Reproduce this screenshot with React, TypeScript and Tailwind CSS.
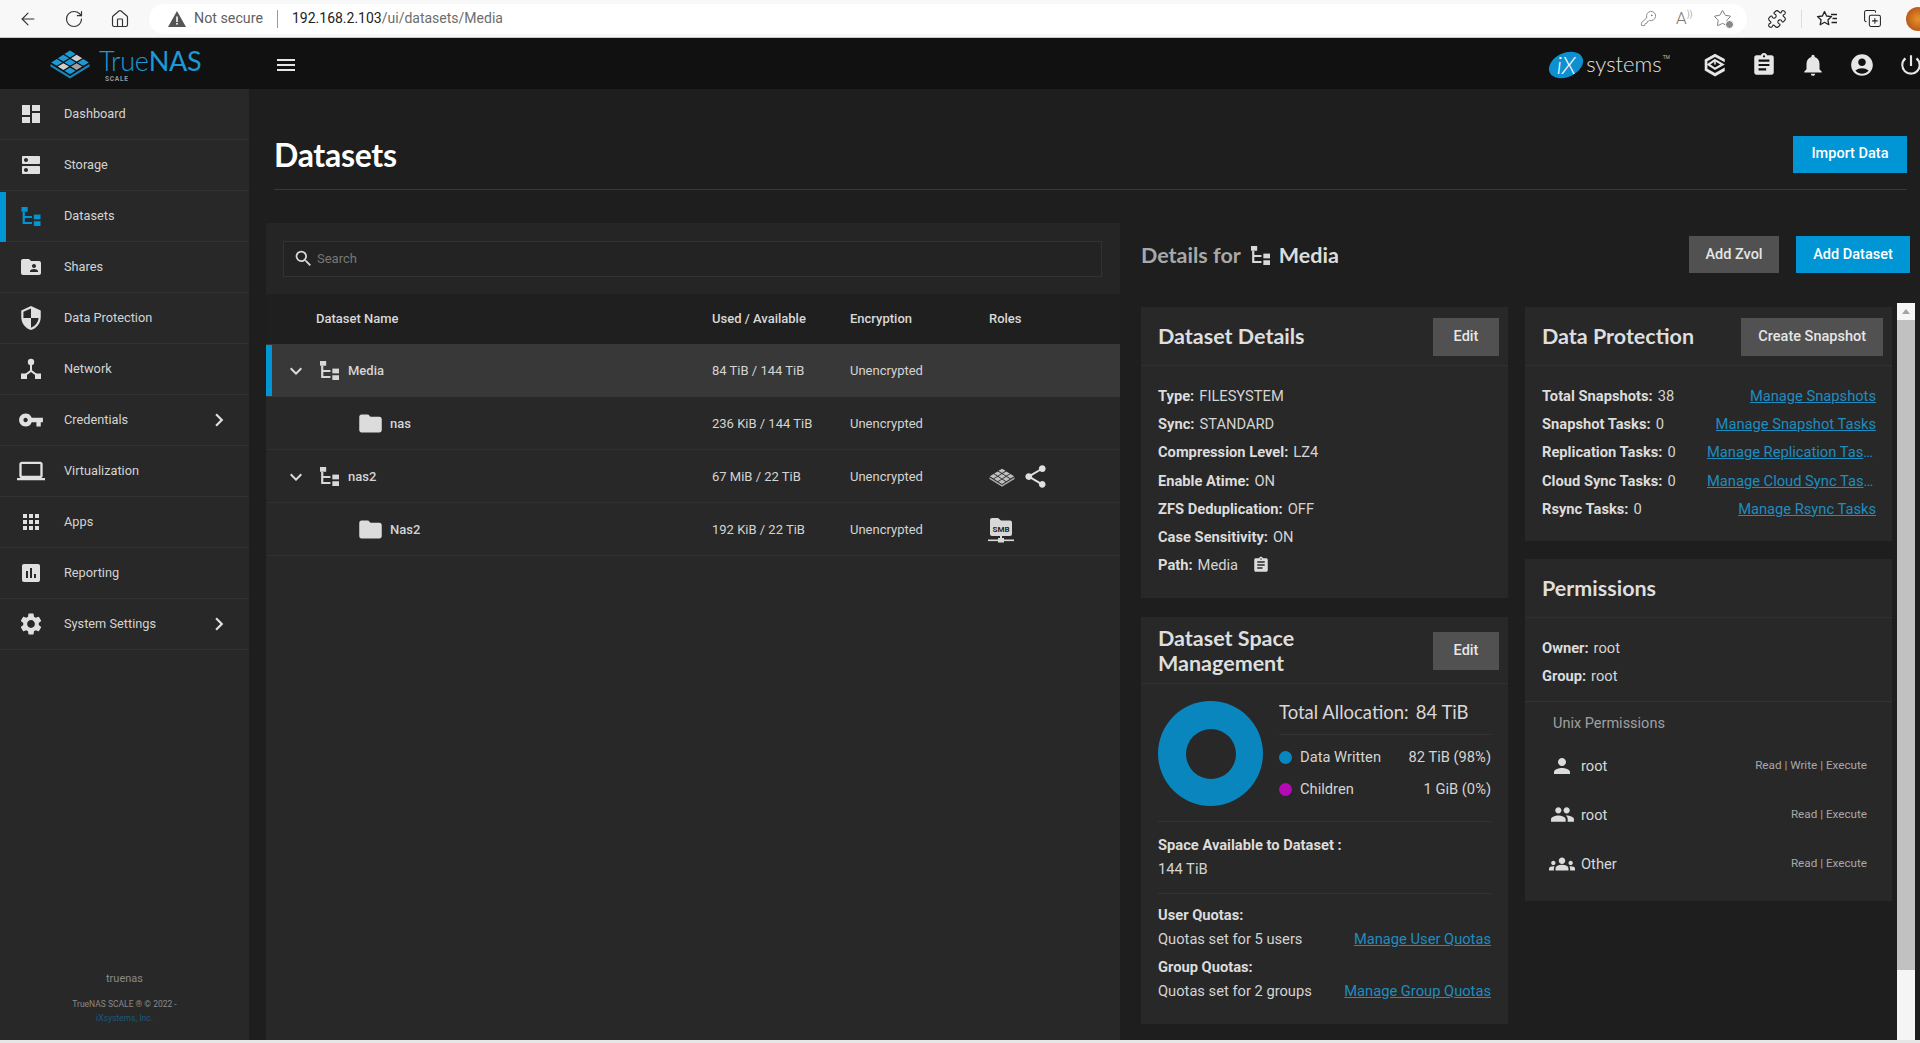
import React from "react";
import {
  MdDashboard, MdDns, MdFolderShared, MdSecurity, MdVpnKey, MdLaptop, MdApps, MdAssessment, MdSettings,
  MdChevronRight, MdExpandMore, MdFolder, MdPerson, MdPeople, MdGroups, MdAccountCircle, MdNotifications,
  MdAssignment, MdPowerSettingsNew, MdShare, MdSearch, MdMenu,
} from "react-icons/md";
import { LuArrowLeft, LuRotateCw, LuHouse, LuKeyRound, LuPuzzle, LuStar, LuCopyPlus } from "react-icons/lu";

const HEAD = { fontFamily: "Lato, 'Open Sans', sans-serif" };

function TreeIcon({ className }: { className?: string }) {
  return (
    <svg viewBox="0 0 20 20" className={className} fill="currentColor">
      <rect x="0" y="0" width="6.5" height="5" />
      <path d="M1.2 5h2.3v4.6H11v2.1H3.5v4H11v2.1H1.2z" />
      <rect x="13" y="8" width="7" height="5" />
      <rect x="13" y="15" width="7" height="5" />
    </svg>
  );
}

function NetworkIcon({ className }: { className?: string }) {
  return (
    <svg viewBox="0 0 24 24" className={className} fill="currentColor">
      <circle cx="12" cy="5" r="3.2" />
      <path d="M11 7h2v6.2l5.2 4-1.2 1.6L12 15l-5 3.8-1.2-1.6 5.2-4z" />
      <rect x="2" y="16.5" width="6" height="5.5" />
      <rect x="16" y="16.5" width="6" height="5.5" />
    </svg>
  );
}

function Rhombi({ className, colors }: { className?: string; colors: string[] }) {
  const items: React.ReactElement[] = [];
  for (let i = 0; i < 3; i++) {
    for (let j = 0; j < 3; j++) {
      const cx = 21 + (i - j) * 6.6;
      const cy = 6 + (i + j) * 4.2;
      items.push(
        <polygon
          key={`${i}-${j}`}
          points={`${cx},${cy - 3.4} ${cx + 5.6},${cy} ${cx},${cy + 3.4} ${cx - 5.6},${cy}`}
          fill={colors[(i * 3 + j) % colors.length]}
        />
      );
    }
  }
  return (
    <svg viewBox="0 0 42 31" className={className}>
      {items}
      <path d="M1.5 16 21 28l19.5-12v2.6L21 30.5 1.5 18.6z" fill={colors[0]} opacity="0.85" />
    </svg>
  );
}

function CubeIcon({ className }: { className?: string }) {
  return (
    <svg viewBox="0 0 24 24" className={className} fill="none" stroke="currentColor">
      <path d="M12 1.5 21 6.5v3L12 4.6 5 8.6v6.8l7 4 9-5.2V17.5l-9 5-9.5-5.5V7z" fill="currentColor" stroke="none" />
      <path d="M12 7.5 19 11.5 12 15.5 6 11.5z" strokeWidth="2" />
      <path d="M12 7.5v4" strokeWidth="1.5" />
    </svg>
  );
}

function SmbIcon({ className }: { className?: string }) {
  return (
    <svg viewBox="0 0 26 26" className={className}>
      <path d="M2 3a2 2 0 0 1 2-2h6l3 2.5h9a2 2 0 0 1 2 2V17a2 2 0 0 1-2 2H4a2 2 0 0 1-2-2z" fill="#d8d8d8" />
      <text x="13" y="14.5" textAnchor="middle" fontSize="8" fontWeight="700" fontFamily="Roboto, sans-serif" fill="#282828">SMB</text>
      <rect x="12" y="19" width="2" height="3" fill="#d8d8d8" />
      <rect x="0" y="22.5" width="26" height="1.6" fill="#d8d8d8" />
      <rect x="10" y="21" width="6" height="4.5" fill="#d8d8d8" />
    </svg>
  );
}

function FavIcon({ className }: { className?: string }) {
  return (
    <svg viewBox="0 0 22 20" className={className} fill="none" stroke="currentColor" strokeWidth="1.3" strokeLinejoin="round">
      <path d="M8.5 2.5 10.6 7l4.9.6-3.6 3.3.9 4.8-4.3-2.4-4.3 2.4.9-4.8L1.5 7.6 6.4 7z" />
      <path d="M15 5.5h6M16.5 9.5H21M15.5 13.5H21" />
    </svg>
  );
}

function BrowserBar() {
  return (
    <div className="flex h-[38px] shrink-0 items-center bg-[#f8f8f8] border-b border-[#c8c8c8] overflow-hidden text-[#333]">
      <div className="flex shrink-0 items-center w-[149px] pl-[18px] gap-[26px]">
        <LuArrowLeft size={20} strokeWidth={1.4} />
        <LuRotateCw size={20} strokeWidth={1.4} />
        <LuHouse size={20} strokeWidth={1.4} />
      </div>
      <div className="flex h-[30px] w-[1598px] shrink-0 items-center rounded-full bg-white pl-[19px] pr-[15px] font-['Roboto',sans-serif] text-[14px]">
        <svg viewBox="0 0 18 16" className="h-[16px] w-[18px] text-[#555]" fill="currentColor">
          <path d="M9 0 18 16H0z" />
          <rect x="8.2" y="5.5" width="1.6" height="5.5" fill="#fff" />
          <rect x="8.2" y="12" width="1.6" height="1.6" fill="#fff" />
        </svg>
        <span className="ml-[8px] text-[14.25px] text-[#5f5f5f]">Not secure</span>
        <span className="mx-[14px] h-[18px] w-px bg-[#999]" />
        <span className="text-[#222]">192.168.2.103</span>
        <span className="text-[#6d6d6d]">/ui/datasets/Media</span>
        <div className="ml-auto flex items-center gap-[19px] text-[#777]">
          <LuKeyRound size={17} strokeWidth={1.2} />
          <span className="w-[18px] text-[17px] leading-none font-light">A<span className="text-[9px] align-top">))</span></span>
          <span className="relative flex">
            <LuStar size={19} strokeWidth={1.2} />
            <span className="absolute -bottom-px -right-[2px] h-[9px] w-[9px] rounded-full bg-[#888] border border-white" />
          </span>
        </div>
      </div>
      <div className="ml-[20px] flex shrink-0 items-center text-[#222]">
        <LuPuzzle size={20} strokeWidth={1.3} />
        <span className="mx-[14px] h-[18px] w-px bg-[#ddd]" />
        <FavIcon className="h-[20px] w-[22px]" />
        <LuCopyPlus size={19} strokeWidth={1.3} className="ml-[25px]" />
        <span className="ml-[24px] h-[24px] w-[24px] shrink-0 rounded-full bg-[radial-gradient(circle,#e8932c,#a8420f)]" />
      </div>
    </div>
  );
}

function TopBar() {
  return (
    <div className="flex h-[51px] shrink-0 items-center bg-[#111111] overflow-hidden">
      <div className="flex w-[249px] shrink-0 items-center pl-[49px]">
        <Rhombi className="h-[31px] w-[42px]" colors={["#1b9ad6", "#1b9ad6", "#1b9ad6", "#cfcfcf", "#1b9ad6", "#cfcfcf", "#1b9ad6", "#a0a0a0", "#1b9ad6"]} />
        <div className="relative ml-[8px] h-[44px] w-[102px]">
          <span style={HEAD} className="block text-[27px] leading-[36px] text-[#1b9ad6] tracking-[-0.3px] pt-[1px]">
            <span className="font-light">True</span><span className="font-normal">NAS</span>
          </span>
          <span className="absolute left-[6px] top-[34px] text-[6.5px] font-bold leading-none tracking-[0.8px] text-[#999] font-['Roboto',sans-serif]">SCALE</span>
        </div>
      </div>
      <MdMenu size={24} className="ml-[25px] mt-[2px] text-[#e6e6e6]" />
      <div className="ml-auto flex items-center pt-[2px]">
        <div className="relative mr-[2px] flex h-[28px] w-[36px] items-center justify-center">
          <span className="absolute inset-x-0 top-[2px] h-[24px] -rotate-[25deg] rounded-[50%] bg-[#0e8fd0]" />
          <span className="relative text-[24px] italic font-light leading-none text-white font-['Lato',sans-serif]">iX</span>
        </div>
        <span className="text-[22px] leading-none font-light text-[#e0e0e0] font-['Lato',sans-serif] -mt-[2px]">systems</span>
        <span className="mb-[14px] ml-px text-[5px] text-[#bbb] font-['Roboto',sans-serif]">TM</span>
        <div className="ml-[32px] flex items-center gap-[23px] text-[#e6e6e6] -mr-[4px]">
          <CubeIcon className="h-[26px] w-[26px]" />
          <MdAssignment size={26} />
          <MdNotifications size={26} />
          <MdAccountCircle size={26} />
          <MdPowerSettingsNew size={26} />
        </div>
      </div>
    </div>
  );
}

const NAV = [
  { label: "Dashboard", icon: <MdDashboard size={24} /> },
  { label: "Storage", icon: <MdDns size={24} /> },
  { label: "Datasets", icon: <TreeIcon className="h-[19px] w-[20px]" />, active: true },
  { label: "Shares", icon: <MdFolderShared size={24} /> },
  { label: "Data Protection", icon: <MdSecurity size={26} /> },
  { label: "Network", icon: <NetworkIcon className="h-[24px] w-[24px]" /> },
  { label: "Credentials", icon: <MdVpnKey size={26} />, more: true },
  { label: "Virtualization", icon: <MdLaptop size={28} /> },
  { label: "Apps", icon: <MdApps size={24} /> },
  { label: "Reporting", icon: <MdAssessment size={24} /> },
  { label: "System Settings", icon: <MdSettings size={26} />, more: true },
];

function Sidebar() {
  return (
    <aside className="flex w-[249px] shrink-0 flex-col bg-[#282828] font-['Roboto',sans-serif]">
      {NAV.map((n) => (
        <div key={n.label} className="relative flex h-[51px] shrink-0 items-center border-b border-[#323232] text-[12.75px] text-[#d4d4d4]">
          {n.active && <span className="absolute left-0 top-px h-[50px] w-[6px] bg-[#0095d5]" />}
          <span className={`flex w-[64px] shrink-0 items-center justify-center pr-[3px] ${n.active ? "text-[#0095d5]" : "text-[#e0e0e0]"}`}>{n.icon}</span>
          <span>{n.label}</span>
          {n.more && <MdChevronRight size={26} className="ml-auto mr-[17px] text-[#e0e0e0]" />}
        </div>
      ))}
      <div className="mt-auto flex flex-col items-center pb-[15px] text-[#8a8a8a]">
        <span className="text-[11px] leading-[14px]">truenas</span>
        <span className="mt-[11px] text-[8.5px] leading-[14px]">TrueNAS SCALE ® © 2022 -</span>
        <span className="text-[8.5px] leading-[14px] text-[#1c5a78]">iXsystems, Inc.</span>
      </div>
    </aside>
  );
}

const ROWS = [
  { name: "Media", used: "84 TiB / 144 TiB", root: true, active: true },
  { name: "nas", used: "236 KiB / 144 TiB" },
  { name: "nas2", used: "67 MiB / 22 TiB", root: true, roles: "share" },
  { name: "Nas2", used: "192 KiB / 22 TiB", roles: "smb" },
];

function DatasetTable() {
  return (
    <section className="ml-[17px] flex w-[854px] shrink-0 flex-col bg-[#282828] font-['Roboto',sans-serif]">
      <div className="flex h-[71px] shrink-0 items-center bg-[#252525] pl-[17px] pr-[18px]">
        <div className="flex h-[36px] w-full items-center border border-[#323232] bg-[#232323] pl-[9px]">
          <MdSearch size={21} className="text-[#d8d8d8]" />
          <span className="ml-[3px] text-[13px] text-[#777]">Search</span>
        </div>
      </div>
      <div className="grid h-[50px] shrink-0 grid-cols-[446px_138px_138px_1fr] items-center bg-[#1f1f1f] text-[13px] font-medium text-[#d8d8d8]">
        <span className="pl-[50px]">Dataset Name</span>
        <span>Used / Available</span>
        <span>Encryption</span>
        <span className="pl-px">Roles</span>
      </div>
      {ROWS.map((r) => (
        <div
          key={r.name}
          className={`relative grid h-[53px] shrink-0 grid-cols-[446px_138px_138px_1fr] items-center border-b pt-px text-[13px] text-[#d4d4d4] ${r.active ? "bg-[#383838] border-[#383838]" : "border-[#303030]"}`}
        >
          {r.active && <span className="absolute left-0 top-px h-[51px] w-[6px] bg-[#0095d5]" />}
          <span className="flex items-center font-medium">
            {r.root ? (
              <span className="flex items-center pl-[18px]">
                <MdExpandMore size={24} className="text-[#dcdcdc]" />
                <TreeIcon className="ml-[12px] h-[19px] w-[19px] text-[#d8d8d8]" />
                <span className="ml-[9px]">{r.name}</span>
              </span>
            ) : (
              <span className="flex items-center pl-[91px]">
                <MdFolder size={27} className="text-[#dcdcdc]" />
                <span className="ml-[6px]">{r.name}</span>
              </span>
            )}
          </span>
          <span>{r.used}</span>
          <span>Unencrypted</span>
          <span className="flex items-center">
            {r.roles === "share" && (
              <>
                <Rhombi className="h-[20px] w-[28px] opacity-90" colors={["#d0d0d0"]} />
                <MdShare size={27} className="ml-[6px] text-[#e0e0e0]" />
              </>
            )}
            {r.roles === "smb" && <SmbIcon className="h-[26px] w-[26px]" />}
          </span>
        </div>
      ))}
    </section>
  );
}

function Card({ title, action, children, className = "", headerClass = "min-h-[59px]" }: { title: React.ReactNode; action?: string; children: React.ReactNode; className?: string; headerClass?: string }) {
  return (
    <div className={`flex shrink-0 flex-col bg-[#282828] ${className}`}>
      <div className={`flex items-center justify-between border-b border-[#303030] pl-[17px] pr-[9px] pt-px ${headerClass}`}>
        <h2 style={HEAD} className="text-[21.5px] font-bold leading-[25px] text-[#dedede]">{title}</h2>
        {action && (
          <button className="flex h-[38px] shrink-0 items-center justify-center bg-[#515151] px-[17px] min-w-[66px] text-[14.5px] font-medium text-[#e6e6e6]">
            {action}
          </button>
        )}
      </div>
      {children}
    </div>
  );
}

function Kv({ k, v, children }: { k: string; v: string; children?: React.ReactNode }) {
  return (
    <div className="flex h-[28.2px] items-center text-[14.7px] text-[#d4d4d4]">
      <span className="font-bold text-[#dcdcdc]">{k}</span>
      <span className="ml-[5px]">{v}</span>
      {children}
    </div>
  );
}

const LINK = "text-[14.7px] text-[#1f8dc0] underline";

function DetailsCard() {
  return (
    <Card title="Dataset Details" action="Edit" className="h-[291px]">
      <div className="px-[17px] pt-[16px]">
        <Kv k="Type:" v="FILESYSTEM" />
        <Kv k="Sync:" v="STANDARD" />
        <Kv k="Compression Level:" v="LZ4" />
        <Kv k="Enable Atime:" v="ON" />
        <Kv k="ZFS Deduplication:" v="OFF" />
        <Kv k="Case Sensitivity:" v="ON" />
        <Kv k="Path:" v="Media">
          <MdAssignment size={18} className="ml-[14px] text-[#dcdcdc]" />
        </Kv>
      </div>
    </Card>
  );
}

function SpaceCard() {
  return (
    <Card title={<>Dataset Space<br />Management</>} action="Edit" className="mt-[19px] h-[407px]" headerClass="min-h-[67px]">
      <div className="px-[17px] text-[14.7px] text-[#d4d4d4]">
        <div className="flex border-b border-[#333] pb-[15px] pt-[17px]">
          <div className="flex h-[105px] w-[105px] shrink-0 items-center justify-center rounded-full bg-[#0a86bf] relative">
            <span className="absolute left-1/2 top-0 h-[27px] w-px bg-[#7a4cc4]" />
            <span className="h-[50px] w-[50px] rounded-full bg-[#282828]" />
          </div>
          <div className="ml-[16px] flex-1">
            <div style={HEAD} className="flex h-[24px] items-center text-[18.5px] text-[#d8d8d8]">
              Total Allocation:<span className="ml-[7px]">84 TiB</span>
            </div>
            <div className="mt-[9px] border-t border-[#333] pt-[6px]">
              <div className="flex h-[32px] items-center">
                <span className="h-[13px] w-[13px] rounded-full bg-[#0a86bf]" />
                <span className="ml-[8px]">Data Written</span>
                <span className="ml-auto">82 TiB (98%)</span>
              </div>
              <div className="flex h-[32px] items-center">
                <span className="h-[13px] w-[13px] rounded-full bg-[#b30ab3]" />
                <span className="ml-[8px]">Children</span>
                <span className="ml-auto">1 GiB (0%)</span>
              </div>
            </div>
          </div>
        </div>
        <div className="border-b border-[#333] pb-[12px] pt-[11px]">
          <div className="h-[24px] font-bold leading-[24px] text-[#dcdcdc]">Space Available to Dataset :</div>
          <div className="h-[24px] leading-[24px]">144 TiB</div>
        </div>
        <div className="pt-[9px]">
          <div className="h-[24px] font-bold leading-[24px] text-[#dcdcdc]">User Quotas:</div>
          <div className="flex h-[24px] items-center justify-between">
            <span>Quotas set for 5 users</span>
            <a className={LINK}>Manage User Quotas</a>
          </div>
          <div className="mt-[4px] h-[24px] font-bold leading-[24px] text-[#dcdcdc]">Group Quotas:</div>
          <div className="flex h-[24px] items-center justify-between">
            <span>Quotas set for 2 groups</span>
            <a className={LINK}>Manage Group Quotas</a>
          </div>
        </div>
      </div>
    </Card>
  );
}

const PROT = [
  ["Total Snapshots:", "38", "Manage Snapshots"],
  ["Snapshot Tasks:", "0", "Manage Snapshot Tasks"],
  ["Replication Tasks:", "0", "Manage Replication Tasks"],
  ["Cloud Sync Tasks:", "0", "Manage Cloud Sync Tasks"],
  ["Rsync Tasks:", "0", "Manage Rsync Tasks"],
];

function ProtectionCard() {
  return (
    <Card title="Data Protection" action="Create Snapshot" className="h-[234px]">
      <div className="pl-[17px] pr-[16px] pt-[16px]">
        {PROT.map(([k, v, l]) => (
          <div key={k} className="flex items-center justify-between">
            <Kv k={k} v={v} />
            <a className={`${LINK} block max-w-[169px] truncate`}>{l}</a>
          </div>
        ))}
      </div>
    </Card>
  );
}

function PermRow({ icon, who, perms }: { icon: React.ReactNode; who: string; perms: string }) {
  return (
    <div className="flex h-[49px] items-center">
      <span className="-ml-px flex w-[28px] shrink-0 justify-center text-[#dcdcdc]">{icon}</span>
      <span className="ml-[5px] text-[14.7px] text-[#d8d8d8]">{who}</span>
      <span className="ml-auto text-[11.7px] text-[#a8a8a8]">{perms}</span>
    </div>
  );
}

function PermissionsCard() {
  return (
    <Card title="Permissions" className="mt-[18px] h-[342px]">
      <div className="border-b border-[#333] px-[17px] pb-[11px] pt-[16px]">
        <Kv k="Owner:" v="root" />
        <Kv k="Group:" v="root" />
      </div>
      <div className="pl-[24px] pr-[25px]">
        <div className="pl-[4px] pt-[12px] text-[14.5px] leading-[20px] text-[#a0a0a0]">Unix Permissions</div>
        <div className="mt-[7px]">
          <PermRow icon={<MdPerson size={24} />} who="root" perms="Read | Write | Execute" />
          <PermRow icon={<MdPeople size={25} />} who="root" perms="Read | Execute" />
          <PermRow icon={<MdGroups size={26} />} who="Other" perms="Read | Execute" />
        </div>
      </div>
    </Card>
  );
}

function ScrollBar() {
  return (
    <div className="ml-[5px] flex w-[18px] shrink-0 flex-col bg-[#f5f5f5]">
      <div className="flex h-[17px] items-center justify-center bg-[#f5f5f5]">
        <span className="h-0 w-0 border-x-[4px] border-b-[5px] border-x-transparent border-b-[#a3a3a3]" />
      </div>
      <div className="h-[650px] bg-[#c1c1c1]" />
    </div>
  );
}

function DetailsPane() {
  return (
    <section className="ml-[21px] flex min-w-0 flex-1 flex-col font-['Roboto',sans-serif]">
      <div className="flex h-[80px] shrink-0 items-start justify-between pr-[10px] pt-[13px]">
        <div className="flex h-[37px] items-center pt-[1px] text-[21.5px] font-bold" style={HEAD}>
          <span className="text-[#a8a8a8]">Details for</span>
          <TreeIcon className="ml-[10px] h-[19px] w-[19px] text-[#d8d8d8]" />
          <span className="ml-[9px] text-[#dcdcdc]">Media</span>
        </div>
        <div className="flex gap-[17px] text-[14.5px] font-medium">
          <button className="h-[37px] w-[90px] bg-[#515151] text-[#e6e6e6]">Add Zvol</button>
          <button className="h-[37px] w-[114px] bg-[#0095d5] text-white">Add Dataset</button>
        </div>
      </div>
      <div className="flex min-h-0 flex-1">
        <div className="flex w-[367px] shrink-0 flex-col pt-[4px]">
          <DetailsCard />
          <SpaceCard />
        </div>
        <div className="ml-[17px] flex w-[367px] shrink-0 flex-col pt-[4px]">
          <ProtectionCard />
          <PermissionsCard />
        </div>
        <ScrollBar />
      </div>
    </section>
  );
}

export default function App() {
  return (
    <div className="flex h-screen flex-col overflow-hidden bg-[#1e1e1e] font-['Roboto',sans-serif]">
      <BrowserBar />
      <TopBar />
      <div className="flex min-h-0 flex-1">
        <Sidebar />
        <main className="flex min-w-0 flex-1 flex-col">
          <div className="ml-[25px] mr-[13px] flex h-[101px] shrink-0 items-center justify-between border-b border-[#383838] pt-[30px]">
            <h1 style={HEAD} className="mt-[1px] text-[32px] font-bold leading-none text-white tracking-[-0.3px]">Datasets</h1>
            <button className="h-[37px] w-[114px] bg-[#0095d5] text-[14.5px] font-medium text-white">Import Data</button>
          </div>
          <div className="flex min-h-0 flex-1 pt-[33px]">
            <DatasetTable />
            <DetailsPane />
          </div>
        </main>
      </div>
      <div className="h-[3px] shrink-0 bg-[#e6e6e6]" />
    </div>
  );
}
